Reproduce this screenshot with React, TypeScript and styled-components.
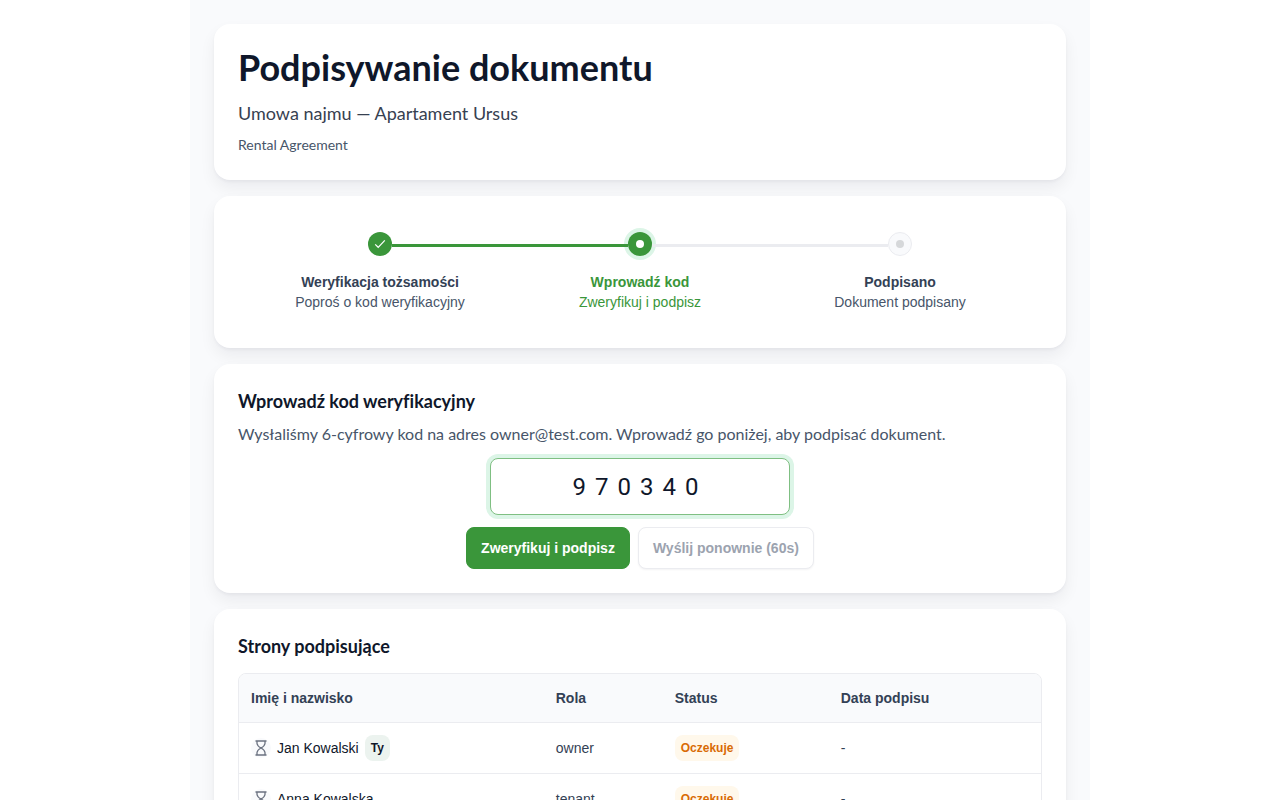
import React from "react";
import styled, { createGlobalStyle, css } from "styled-components";

const display = `Lato, "Open Sans", sans-serif`;
const body = `"Liberation Sans", Arial, sans-serif`;

const GlobalStyle = createGlobalStyle`
  * { box-sizing: border-box; }
  body { margin: 0; background: #fff; color: #111827; font-family: ${body}; font-size: 14px; line-height: 20px; }
  h1, h2, p, ol { margin: 0; padding: 0; }
`;

const Page = styled.main`
  max-width: 900px;
  min-height: 100vh;
  margin: 0 auto;
  padding: 24px;
  display: flex;
  flex-direction: column;
  gap: 16px;
  background: #f9fafc;
`;

const Card = styled.section`
  padding: 24px;
  background: #fff;
  border-radius: 16px;
  box-shadow: 0 2px 3px rgba(17, 24, 39, 0.04), 0 8px 16px rgba(17, 24, 39, 0.06);
`;

const Intro = styled(Card)`
  display: flex;
  flex-direction: column;
  gap: 8px;
  font-family: ${display};
`;

const Title = styled.h1`
  margin-bottom: 6px;
  font-size: 36px;
  line-height: 38px;
  font-weight: 700;
  color: #0f172a;
`;

const DocumentName = styled.p`
  font-size: 18px;
  line-height: 26px;
  color: #374151;
`;

const DocumentType = styled.p`
  font-size: 14px;
  line-height: 22px;
  color: #475569;
`;

const Steps = styled.ol`
  display: grid;
  grid-template-columns: repeat(3, 1fr);
  padding: 12px;
  list-style: none;
`;

type StepState = "done" | "active" | "todo";

const Step = styled.li<{ $state: StepState }>`
  text-align: center;
  color: ${(p) => (p.$state === "active" ? "#3a963a" : "#475569")};
  strong {
    display: block;
    color: ${(p) => (p.$state === "active" ? "#3a963a" : "#334155")};
  }
`;

const Track = styled.div`
  display: flex;
  align-items: center;
  margin-bottom: 16px;
`;

const Line = styled.span<{ $tone: "green" | "gray" | "none" }>`
  position: relative;
  flex: 1;
  height: 3px;
  margin-top: 3px;
  background: ${(p) => ({ green: "#3a963a", gray: "#ebecf0", none: "transparent" })[p.$tone]};
`;

const Dot = styled.span<{ $state: StepState }>`
  width: 24px;
  height: 24px;
  border-radius: 50%;
  display: grid;
  place-items: center;
  background: #3a963a;
  color: #fff;
  ${(p) => p.$state === "active" && css`box-shadow: 0 0 0 4px #dcf5e7;`}
  ${(p) => p.$state === "todo" && css`background: #f9fafc; color: #d6d8da; border: 1px solid #ebecf0;`}
`;

const Pip = styled.i`
  width: 8px;
  height: 8px;
  border-radius: 50%;
  background: currentColor;
`;

const Heading = styled.h2`
  font-family: ${display};
  font-size: 18px;
  line-height: 26px;
  font-weight: 700;
  font-variant-ligatures: none;
  color: #0f172a;
`;

const Hint = styled.p`
  margin: 8px 0 12px;
  font-family: ${display};
  font-size: 16px;
  line-height: 24px;
  color: #475569;
`;

const CodeForm = styled.form`
  display: flex;
  flex-direction: column;
  align-items: center;
  gap: 12px;
`;

const CodeInput = styled.input`
  width: 100%;
  max-width: 300px;
  height: 57px;
  padding: 0 16px;
  border: 1px solid #7fbf82;
  border-radius: 8px;
  outline: none;
  box-shadow: 0 0 0 4px #dcf5e7;
  font-family: Roboto, sans-serif;
  font-size: 24px;
  letter-spacing: 9px;
  text-align: center;
  color: #0f172a;
`;

const Actions = styled.div`
  display: flex;
  gap: 8px;
`;

const Button = styled.button<{ $primary?: boolean }>`
  height: 42px;
  padding: 0 14px;
  border: 1px solid ${(p) => (p.$primary ? "#3a963a" : "#ebecf0")};
  border-radius: 8px;
  background: ${(p) => (p.$primary ? "#3a963a" : "#fff")};
  color: ${(p) => (p.$primary ? "#fff" : "#9ca3af")};
  box-shadow: ${(p) => (p.$primary ? "none" : "0 1px 2px rgba(15, 23, 42, 0.05)")};
  font-family: ${body};
  font-size: 14px;
  font-weight: 700;
`;

const TableFrame = styled.div`
  margin-top: 14px;
  border: 1px solid #ebecf0;
  border-radius: 8px;
  overflow: hidden;
`;

const Table = styled.table`
  width: 100%;
  table-layout: fixed;
  border-collapse: separate;
  border-spacing: 0;
  text-align: left;
  color: #334155;

  th, td { padding: 0 12px; }
  th { height: 49px; background: #f9fafc; border-bottom: 1px solid #ebecf0; }
  td { height: 51px; border-bottom: 1px solid #ebecf0; }
  tbody tr:last-child td { height: 50px; border-bottom: 0; }
  th:nth-child(1) { width: 38%; }
  th:nth-child(2) { width: 119px; }
  th:nth-child(3) { width: 166px; }
`;

const Person = styled.div`
  display: flex;
  align-items: center;
  gap: 6px;
  color: #0f172a;
`;

const IconDisc = styled.span`
  width: 20px;
  height: 20px;
  border-radius: 50%;
  display: grid;
  place-items: center;
  background: #f9fafc;
  color: #6b7280;
`;

const Badge = styled.span<{ $warn?: boolean }>`
  display: block;
  width: fit-content;
  padding: 3px 6px;
  border-radius: 8px;
  font-size: 12px;
  line-height: 20px;
  font-weight: 700;
  background: ${(p) => (p.$warn ? "#fff8eb" : "#ecf3ef")};
  color: ${(p) => (p.$warn ? "#d96b06" : "#0f172a")};
`;

const Check = () => (
  <svg width="12" height="12" viewBox="0 0 12 12" fill="none" stroke="currentColor" strokeWidth="1.2" aria-hidden="true">
    <path d="M1.2 6.4 4.2 9.3 10.8 2.4" />
  </svg>
);

const Hourglass = () => (
  <svg width="16" height="16" viewBox="0 0 16 16" fill="none" stroke="currentColor" strokeWidth="1.3" aria-hidden="true">
    <path d="M2.5 1h11M2.5 15h11M4 1v2.5Q4.5 6.3 8 8 11.5 6.3 12 3.5V1M4 15v-2.5Q4.5 9.7 8 8 11.5 9.7 12 12.5V15" />
  </svg>
);

const steps: { title: string; text: string; state: StepState }[] = [
  { title: "Weryfikacja tożsamości", text: "Poproś o kod weryfikacyjny", state: "done" },
  { title: "Wprowadź kod", text: "Zweryfikuj i podpisz", state: "active" },
  { title: "Podpisano", text: "Dokument podpisany", state: "todo" },
];

const signers = [
  { name: "Jan Kowalski", role: "owner", you: true },
  { name: "Anna Kowalska", role: "tenant", you: false },
];

export default function App() {
  return (
    <>
      <GlobalStyle />
      <Page>
        <Intro>
          <Title>Podpisywanie dokumentu</Title>
          <DocumentName>Umowa najmu — Apartament Ursus</DocumentName>
          <DocumentType>Rental Agreement</DocumentType>
        </Intro>

        <Card>
          <Steps>
            {steps.map((s, i) => (
              <Step key={s.title} $state={s.state}>
                <Track>
                  <Line $tone={i === 0 ? "none" : s.state === "todo" ? "gray" : "green"} />
                  <Dot $state={s.state}>{s.state === "done" ? <Check /> : <Pip />}</Dot>
                  <Line $tone={i === steps.length - 1 ? "none" : s.state === "done" ? "green" : "gray"} />
                </Track>
                <strong>{s.title}</strong>
                {s.text}
              </Step>
            ))}
          </Steps>
        </Card>

        <Card>
          <Heading>Wprowadź kod weryfikacyjny</Heading>
          <Hint>Wysłaliśmy 6-cyfrowy kod na adres owner@test.com. Wprowadź go poniżej, aby podpisać dokument.</Hint>
          <CodeForm onSubmit={(e) => e.preventDefault()}>
            <CodeInput aria-label="Kod weryfikacyjny" inputMode="numeric" maxLength={6} defaultValue="970340" />
            <Actions>
              <Button $primary type="submit">Zweryfikuj i podpisz</Button>
              <Button type="button" disabled>Wyślij ponownie (60s)</Button>
            </Actions>
          </CodeForm>
        </Card>

        <Card>
          <Heading>Strony podpisujące</Heading>
          <TableFrame>
            <Table>
              <thead>
                <tr>
                  <th scope="col">Imię i nazwisko</th>
                  <th scope="col">Rola</th>
                  <th scope="col">Status</th>
                  <th scope="col">Data podpisu</th>
                </tr>
              </thead>
              <tbody>
                {signers.map((s) => (
                  <tr key={s.name}>
                    <td>
                      <Person>
                        <IconDisc><Hourglass /></IconDisc>
                        {s.name}
                        {s.you && <Badge>Ty</Badge>}
                      </Person>
                    </td>
                    <td>{s.role}</td>
                    <td><Badge $warn>Oczekuje</Badge></td>
                    <td>-</td>
                  </tr>
                ))}
              </tbody>
            </Table>
          </TableFrame>
        </Card>
      </Page>
    </>
  );
}
